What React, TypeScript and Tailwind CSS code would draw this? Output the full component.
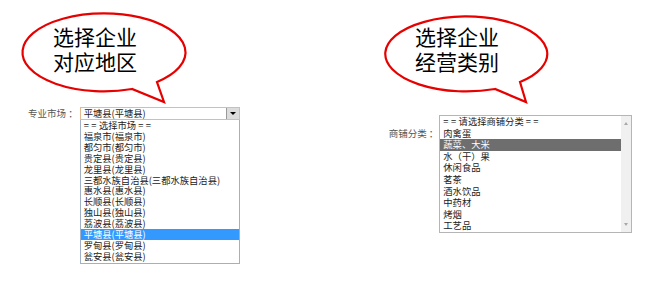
const markets = [
  "==选择市场==",
  "福泉市(福泉市)",
  "都匀市(都匀市)",
  "贵定县(贵定县)",
  "龙里县(龙里县)",
  "三都水族自治县(三都水族自治县)",
  "惠水县(惠水县)",
  "长顺县(长顺县)",
  "独山县(独山县)",
  "荔波县(荔波县)",
  "平塘县(平塘县)",
  "罗甸县(罗甸县)",
  "瓮安县(瓮安县)",
];

const categories = [
  "==请选择商铺分类==",
  "肉禽蛋",
  "蔬菜、大米",
  "水（干）果",
  "休闲食品",
  "茗茶",
  "酒水饮品",
  "中药材",
  "烤烟",
  "工艺品",
];

function Bubble({ lines, d, className }: { lines: string[]; d: string; className: string }) {
  return (
    <div className={`absolute ${className}`}>
      <svg width="190" height="110" className="absolute left-0 top-0">
        <path d={d} fill="white" stroke="#e60000" strokeWidth="2.2" strokeLinejoin="miter" />
      </svg>
      <div className="absolute left-0 top-0 w-[190px] pt-[24px] flex flex-col items-center text-[21px] leading-[25px] text-black">
        {lines.map((l) => (
          <span key={l}>{l}</span>
        ))}
      </div>
    </div>
  );
}

function Label({ text }: { text: string }) {
  return <span className="text-[9.5px] leading-[13px] text-[#555] whitespace-nowrap">{text}</span>;
}

function Row({ text, active, tone }: { text: string; active: boolean; tone: "blue" | "grey" }) {
  const bg = active ? (tone === "blue" ? "bg-[#3399ff] text-white" : "bg-[#6e6e6e] text-white") : "text-[#222]";
  const eq = text.startsWith("==");
  return (
    <div className={`px-[3px] whitespace-nowrap ${bg}`}>
      {eq ? (
        <>
          <span className="tracking-[2.5px]">==</span>
          {text.slice(2, -2)}
          <span className="tracking-[2.5px] ml-[2px]">==</span>
        </>
      ) : (
        text
      )}
    </div>
  );
}

export default function App() {
  return (
    <div
      className="relative w-[660px] h-[284px] bg-white overflow-hidden"
      style={{ fontFamily: '"Noto Sans CJK SC", "Noto Sans", sans-serif' }}
    >
      <div className="flex items-start pt-[107px]">
        <div className="flex items-start ml-[28px]">
          <Label text="专业市场 ：" />
          <div className="ml-[2px] w-[160px]">
            <div className="flex h-[13px] border border-[#e6b98e]">
              <span className="flex-1 px-[3px] text-[9.3px] leading-[11px] text-[#222]">平塘县(平塘县)</span>
              <span className="w-[13px] border-l border-[#999] bg-[#dcdcdc] flex items-center justify-center">
                <span className="w-0 h-0 border-l-[3px] border-r-[3px] border-t-[3px] border-l-transparent border-r-transparent border-t-black" />
              </span>
            </div>
            <div className="border border-t-0 border-[#9fb0c8] text-[9.3px] leading-[10.9px] pb-[1px]">
              {markets.map((m, i) => (
                <Row key={m} text={m} active={i === 10} tone="blue" />
              ))}
            </div>
          </div>
        </div>

        <div className="flex items-start ml-[149px] mt-[8px]">
          <span className="mt-[3px]">
            <Label text="商铺分类 ：" />
          </span>
          <div className="ml-[1px] w-[193px] h-[118px] flex border border-[#b5b5b5]">
            <div className="flex-1 text-[9.3px] leading-[11.6px]">
              {categories.map((c, i) => (
                <Row key={c} text={c} active={i === 2} tone="grey" />
              ))}
            </div>
            <div className="w-[10px] bg-[#f0f0f0] flex flex-col justify-between items-center py-[6px]">
              <span className="w-0 h-0 border-l-[2.5px] border-r-[2.5px] border-b-[3px] border-l-transparent border-r-transparent border-b-[#a8a8a8]" />
              <span className="w-0 h-0 border-l-[2.5px] border-r-[2.5px] border-t-[3px] border-l-transparent border-r-transparent border-t-[#a8a8a8]" />
            </div>
          </div>
        </div>
      </div>

      <Bubble
        className="left-[0px] top-[0px]"
        lines={["选择企业", "对应地区"]}
        d="M 132 89 A 81.5 39 0 1 1 157 82 L 164 102 Z"
      />
      <Bubble
        className="left-[362px] top-[0px]"
        lines={["选择企业", "经营类别"]}
        d="M 133 89 A 81 37.5 0 1 1 158 82 L 164 102 Z"
      />
    </div>
  );
}
